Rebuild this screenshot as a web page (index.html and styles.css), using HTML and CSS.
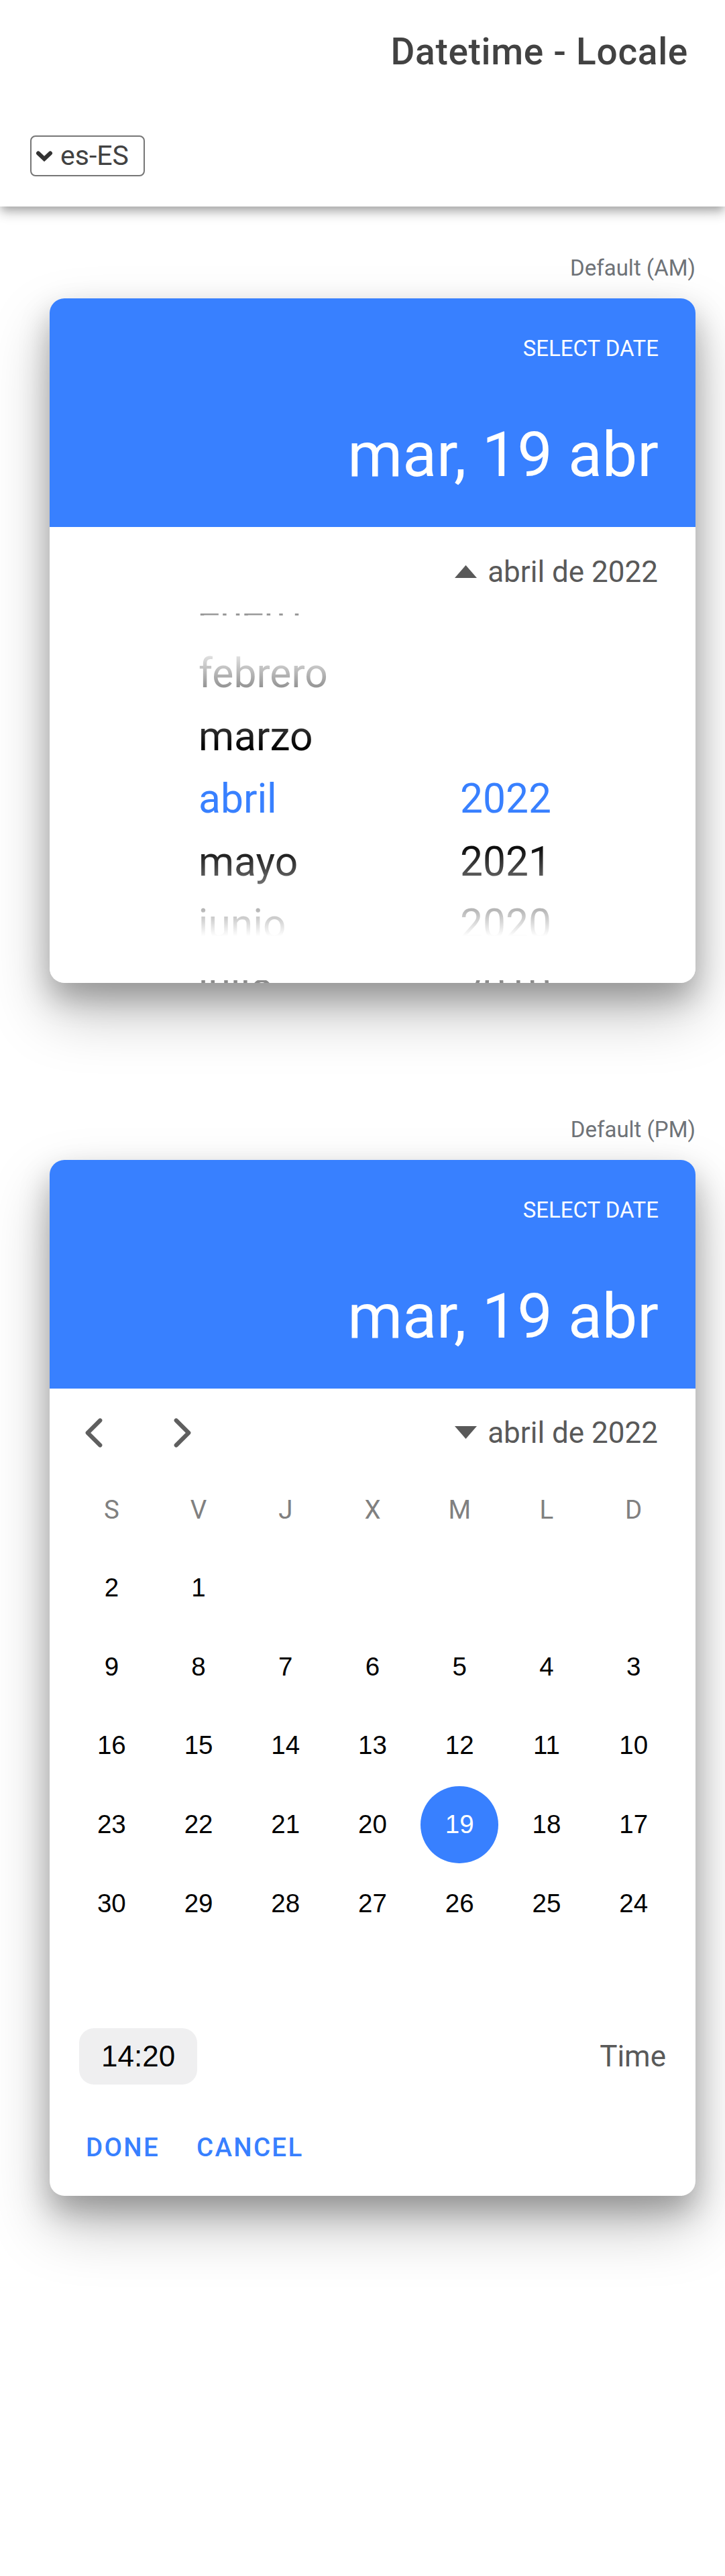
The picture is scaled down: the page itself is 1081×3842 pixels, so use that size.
FILE: index.html
```html
<!DOCTYPE html>
<html lang="es">
<head>
<meta charset="utf-8">
<title>Datetime - Locale</title>
<link rel="stylesheet" href="styles.css">
</head>
<body>
<header class="app-header">
  <div class="toolbar toolbar-title">
    <h1 class="title">Datetime - Locale</h1>
  </div>
  <div class="toolbar toolbar-select">
    <div class="select">
      <svg class="select-arrow" viewBox="0 0 26 16" aria-hidden="true"><polyline points="4,3.5 13,12 22,3.5"/></svg>
      <span class="select-value">es-ES</span>
    </div>
  </div>
</header>

<main class="content">
  <section class="demo">
    <h2 class="demo-label">Default (AM)</h2>
    <div class="datetime">
      <div class="dt-header">
        <div class="dt-title">SELECT DATE</div>
        <div class="dt-date">mar, 19 abr</div>
      </div>
      <div class="month-row">
        <div class="month-year">
          <svg class="caret" viewBox="0 0 33 19" aria-hidden="true"><polygon points="0,19 16.5,0 33,19"/></svg>
          <span>abril de 2022</span>
        </div>
      </div>
      <div class="wheel">
        <div class="wheel-col months">
          <div class="wheel-item">enero</div>
          <div class="wheel-item">febrero</div>
          <div class="wheel-item">marzo</div>
          <div class="wheel-item active">abril</div>
          <div class="wheel-item">mayo</div>
          <div class="wheel-item">junio</div>
          <div class="wheel-item">julio</div>
        </div>
        <div class="wheel-col years">
          <div class="wheel-item active">2022</div>
          <div class="wheel-item">2021</div>
          <div class="wheel-item">2020</div>
          <div class="wheel-item">2019</div>
        </div>
        <div class="fade fade-top"></div>
        <div class="fade fade-bottom"></div>
      </div>
    </div>
  </section>

  <section class="demo">
    <h2 class="demo-label">Default (PM)</h2>
    <div class="datetime">
      <div class="dt-header">
        <div class="dt-title">SELECT DATE</div>
        <div class="dt-date">mar, 19 abr</div>
      </div>
      <div class="cal-header">
        <div class="nav">
          <button class="nav-btn" aria-label="anterior">
            <svg viewBox="0 0 512 512" aria-hidden="true"><polyline points="328 112 184 256 328 400"/></svg>
          </button>
          <button class="nav-btn" aria-label="siguiente">
            <svg viewBox="0 0 512 512" aria-hidden="true"><polyline points="184 112 328 256 184 400"/></svg>
          </button>
        </div>
        <div class="month-year">
          <svg class="caret" viewBox="0 0 33 19" aria-hidden="true"><polygon points="0,0 33,0 16.5,19"/></svg>
          <span>abril de 2022</span>
        </div>
      </div>
      <div class="weekdays">
        <span>S</span><span>V</span><span>J</span><span>X</span><span>M</span><span>L</span><span>D</span>
      </div>
      <div class="days">
        <div class="day">2</div><div class="day">1</div><div class="day"></div><div class="day"></div><div class="day"></div><div class="day"></div><div class="day"></div>
        <div class="day">9</div><div class="day">8</div><div class="day">7</div><div class="day">6</div><div class="day">5</div><div class="day">4</div><div class="day">3</div>
        <div class="day">16</div><div class="day">15</div><div class="day">14</div><div class="day">13</div><div class="day">12</div><div class="day">11</div><div class="day">10</div>
        <div class="day">23</div><div class="day">22</div><div class="day">21</div><div class="day">20</div><div class="day"><span class="day-selected">19</span></div><div class="day">18</div><div class="day">17</div>
        <div class="day">30</div><div class="day">29</div><div class="day">28</div><div class="day">27</div><div class="day">26</div><div class="day">25</div><div class="day">24</div>
      </div>
      <div class="time-row">
        <span class="time-pill">14:20</span>
        <span class="time-label">Time</span>
      </div>
      <div class="actions">
        <button class="action">Done</button>
        <button class="action">Cancel</button>
      </div>
    </div>
  </section>
</main>
</body>
</html>
```

FILE: styles.css
```css
* {
  box-sizing: border-box;
}

html,
body {
  margin: 0;
  padding: 0;
  background: #ffffff;
}

body {
  font-family: Roboto, "Noto Sans", sans-serif;
  color: #000000;
}

/* ---------- header ---------- */
.app-header {
  position: relative;
  z-index: 2;
  background: #ffffff;
  box-shadow: 0 5.5px 11px -2.75px rgba(0, 0, 0, 0.2),
    0 11px 13.75px 0 rgba(0, 0, 0, 0.14),
    0 2.75px 27.5px 0 rgba(0, 0, 0, 0.12);
}

.toolbar {
  height: 154px;
  display: flex;
  align-items: center;
}

.toolbar-title {
  justify-content: flex-end;
  padding: 0 55px;
}

.title {
  margin: 0;
  font-size: 55px;
  font-weight: 500;
  letter-spacing: 0.69px;
  line-height: 1;
  color: #424242;
}

.toolbar-select {
  padding: 3px 45px 0;
}

.select {
  display: flex;
  align-items: center;
  gap: 11px;
  width: 171px;
  height: 61px;
  padding: 0 6px;
  border: 2.75px solid #767676;
  border-radius: 8px;
  color: #424242;
  font-size: 41px;
  line-height: 1;
}

.select-arrow {
  width: 26px;
  height: 16px;
  flex: none;
  fill: none;
  stroke: #333333;
  stroke-width: 6;
  stroke-linecap: round;
  stroke-linejoin: miter;
}

/* ---------- content ---------- */
.content {
  padding: 0 44px 480px;
}

.demo {
  display: flex;
  flex-direction: column;
  align-items: flex-end;
}

.demo + .demo {
  margin-top: 127px;
}

.demo-label {
  margin: 72px 0 26px;
  font-size: 33px;
  line-height: 39px;
  font-weight: 400;
  color: #6f7378;
}

.datetime {
  width: 963px;
  border-radius: 22px;
  overflow: hidden;
  background: #ffffff;
  box-shadow: 0 44px 88px rgba(0, 0, 0, 0.25), 0 22px 44px rgba(0, 0, 0, 0.25);
}

.dt-header {
  height: 341px;
  padding: 55px 55px 0;
  background: #3880ff;
  color: #ffffff;
  text-align: right;
}

.dt-title {
  font-size: 33px;
  line-height: 39px;
}

.dt-date {
  margin-top: 84px;
  font-size: 93.5px;
  line-height: 110px;
}

/* month / year toggle */
.month-row {
  height: 129px;
  padding: 4px 56px 0;
  display: flex;
  align-items: center;
  justify-content: flex-end;
}

.month-year {
  display: flex;
  align-items: center;
  gap: 16px;
  font-size: 44px;
  line-height: 1;
  color: #595959;
}

.caret {
  width: 33px;
  height: 19px;
  fill: #595959;
}

/* ---------- wheel ---------- */
.wheel {
  position: relative;
  height: 551px;
  overflow: hidden;
  display: flex;
  align-items: flex-start;
  padding-left: 222px;
}

.wheel-col {
  display: flex;
  flex-direction: column;
  flex: none;
}

.months {
  width: 390px;
  margin-top: -50.25px;
}

.years {
  padding-top: 230.25px;
}

.wheel-item {
  height: 93.5px;
  line-height: 93.5px;
  font-size: 60.5px;
  color: #000000;
  white-space: nowrap;
}

.wheel-item.active {
  color: #3880ff;
}

.fade {
  position: absolute;
  left: 0;
  right: 0;
  pointer-events: none;
}

.fade-top {
  top: 0;
  height: 223px;
  background: linear-gradient(to bottom,
      rgba(255, 255, 255, 0.6) 0,
      rgba(255, 255, 255, 0.6) 3px,
      #ffffff 3px,
      #ffffff 20%,
      rgba(255, 255, 255, 0) 90%);
}

.fade-bottom {
  top: 319px;
  height: 232px;
  background: linear-gradient(to top,
      rgba(255, 255, 255, 0.55) 0,
      rgba(255, 255, 255, 0.55) 4px,
      #ffffff 4px,
      #ffffff 30%,
      rgba(255, 255, 255, 0) 90%);
}

/* ---------- calendar ---------- */
.cal-header {
  height: 129px;
  padding: 2px 56px 0 0;
  display: flex;
  align-items: center;
  justify-content: space-between;
}

.nav {
  display: flex;
}

.nav-btn {
  width: 132px;
  height: 100px;
  display: flex;
  align-items: center;
  justify-content: center;
  padding: 0;
  border: 0;
  background: none;
}

.nav-btn svg {
  width: 66px;
  height: 66px;
  fill: none;
  stroke: #5f5f5f;
  stroke-width: 48;
  stroke-linecap: round;
  stroke-linejoin: round;
}

.weekdays {
  display: grid;
  grid-template-columns: repeat(7, 1fr);
  align-items: center;
  height: 60px;
  margin: 22px 0 27.7px;
  padding: 0 27.5px;
  text-align: center;
  font-size: 38.5px;
  line-height: 1;
  color: #808080;
}

.days {
  display: grid;
  grid-template-columns: repeat(7, 1fr);
  grid-template-rows: repeat(6, 117.6px);
  padding: 0 27.5px;
}

.day {
  display: flex;
  align-items: center;
  justify-content: center;
  font-family: "Liberation Sans", Arial, sans-serif;
  font-size: 38.5px;
  line-height: 1;
  color: #000000;
}

.day-selected {
  width: 115.5px;
  height: 115.5px;
  border-radius: 50%;
  background: #3880ff;
  color: #ffffff;
  display: flex;
  align-items: center;
  justify-content: center;
}

/* ---------- time + actions ---------- */
.time-row {
  margin-top: 9.7px;
  height: 84px;
  padding: 0 44px;
  display: flex;
  align-items: center;
  justify-content: space-between;
}

.time-pill {
  height: 84px;
  padding: 0 33px;
  border-radius: 22px;
  background: #efeff0;
  display: flex;
  align-items: center;
  font-family: "Liberation Sans", Arial, sans-serif;
  font-size: 44px;
  color: #000000;
}

.time-label {
  font-size: 44px;
  color: #595959;
}

.actions {
  height: 99px;
  margin: 45px 0 22px;
  padding-left: 54px;
  display: flex;
  align-items: center;
  gap: 55px;
}

.action {
  padding: 0;
  border: 0;
  background: none;
  font-family: Roboto, "Noto Sans", sans-serif;
  font-size: 38.5px;
  font-weight: 500;
  line-height: 1;
  letter-spacing: 0.06em;
  text-transform: uppercase;
  color: #3880ff;
}
```
